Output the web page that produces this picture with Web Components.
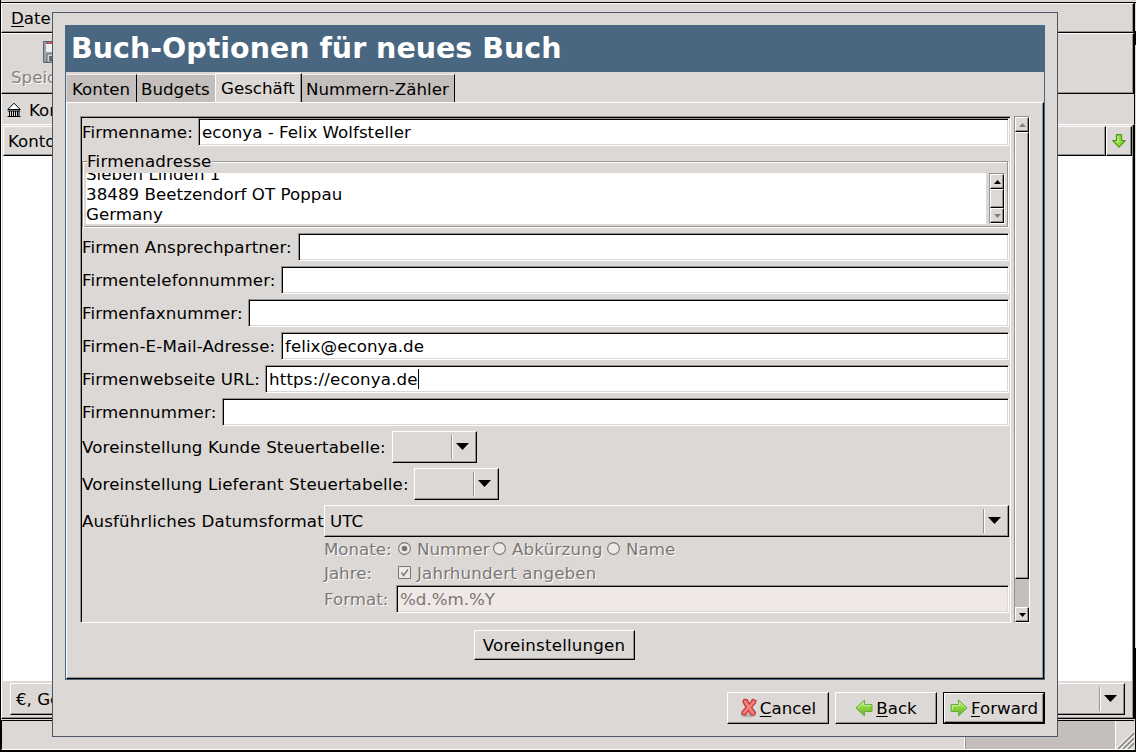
<!DOCTYPE html>
<html lang="de">
<head>
<meta charset="utf-8">
<title>Buch-Optionen für neues Buch</title>
<style>
html,body{margin:0;padding:0}
body{width:1136px;height:752px;overflow:hidden;position:relative;background:#dcd8d5;color:#000;
 font:16.67px/20px "DejaVu Sans",sans-serif;
 --bg:#dcd8d5;--mid:#c4bfbc;--shade:#96928f;--blue:#4a6781}
</style>
</head>
<body>
<main-window></main-window>
<options-dialog heading="Buch-Optionen für neues Buch">
  <tab-bar slot="tabs">
    <tab-label style="width:70px">Konten</tab-label>
    <tab-label style="width:78px" noline>Budgets</tab-label>
    <tab-label style="width:87px" active>Geschäft</tab-label>
    <tab-label style="width:153px">Nummern-Zähler</tab-label>
  </tab-bar>
  <option-list slot="page">
    <form-row label="Firmenname:" w="116"><text-entry style="letter-spacing:.03px">econya - Felix Wolfsteller</text-entry></form-row>
    <address-group></address-group>
    <form-row label="Firmen Ansprechpartner:" w="216"><text-entry></text-entry></form-row>
    <form-row label="Firmentelefonnummer:" w="199"><text-entry></text-entry></form-row>
    <form-row label="Firmenfaxnummer:" w="166"><text-entry></text-entry></form-row>
    <form-row label="Firmen-E-Mail-Adresse:" w="199"><text-entry style="letter-spacing:.05px">felix@econya.de</text-entry></form-row>
    <form-row label="Firmenwebseite URL:" w="183"><text-entry caret style="letter-spacing:.16px">https://econya.de</text-entry></form-row>
    <form-row label="Firmennummer:" w="140"><text-entry></text-entry></form-row>
    <form-row label="Voreinstellung Kunde Steuertabelle:" w="310"><combo-box style="width:85px"></combo-box></form-row>
    <form-row label="Voreinstellung Lieferant Steuertabelle:" w="332"><combo-box style="width:85px"></combo-box></form-row>
    <form-row label="Ausführliches Datumsformat" w="242"><combo-box style="flex:1">UTC</combo-box></form-row>
    <date-format></date-format>
  </option-list>
  <push-button slot="defaults" style="width:161px;height:30px;letter-spacing:.2px">Voreinstellungen</push-button>
  <push-button slot="actions" icon="cancel" style="width:102px;height:32px"><u>C</u>ancel</push-button>
  <push-button slot="actions" icon="back" style="width:102px;height:32px"><u>B</u>ack</push-button>
  <push-button slot="actions" icon="forward" default style="width:102px;height:32px"><u>F</u>orward</push-button>
</options-dialog>
<script>
const base = `*{box-sizing:border-box}
.out{border:1px solid;border-color:#fff #000 #000 #fff;box-shadow:inset -1px -1px 0 var(--shade);background:var(--bg)}`;
function define(name, render) {
  customElements.define(name, class extends HTMLElement {
    connectedCallback() {
      if (this.shadowRoot) return;
      const t = document.createElement('template');
      t.innerHTML = render(this);
      this.attachShadow({mode: 'open'}).append(t.content.cloneNode(true));
    }
  });
}
const arrowPath = 'M1 9 9.5 1V5.5H17V12.5H9.5V17Z';
const green = id => `<defs><linearGradient id="${id}" x1="0" y1="0" x2="0" y2="1"><stop offset="0" stop-color="#b8e676"/><stop offset=".5" stop-color="#8ad33c"/><stop offset="1" stop-color="#68b12e"/></linearGradient></defs>`;
const icons = {
  cancel: `<svg width="18" height="20" viewBox="0 0 18 20"><ellipse cx="8" cy="17.4" rx="7.5" ry="1.8" fill="#aaa6a3" opacity=".7"/><path d="M4 1.2 7.2 1.6 9.4 6 12.4 1.2 16 2.6 15.6 5 11.7 9.4 15.6 14.6 14.6 17 11.2 17.2 8.4 12.6 5.2 17.2 1.6 16 2 13.6 6 9.4 2.8 3.8Z" fill="#f06a6a" stroke="#b93a3e" stroke-width="1.1" stroke-linejoin="round"/><path d="M4.8 3 9 9.4 13.6 15.4M13.8 3.6 8.6 9.6 3.8 15" fill="none" stroke="#fa9c98" stroke-width="1"/></svg>`,
  back: `<svg width="18" height="18" viewBox="0 0 18 18">${green('g')}<path d="${arrowPath}" fill="url(#g)" stroke="#6caa42" stroke-linejoin="round"/><path d="M3.2 8.6 8.6 3.6V6.5H15.5" fill="none" stroke="#d0f39c" stroke-width=".9"/></svg>`,
  forward: `<svg width="18" height="18" viewBox="0 0 18 18">${green('g')}<g transform="matrix(-1 0 0 1 18 0)"><path d="${arrowPath}" fill="url(#g)" stroke="#6caa42" stroke-linejoin="round"/><path d="M15.5 11V6.5H8.6V3.6L3.2 8.6" fill="none" stroke="#d0f39c" stroke-width=".9"/></g></svg>`,
  down: `<svg width="14" height="14" viewBox="0 0 14 14"><path d="M4.5.6H9.5V6.5H13.2L7 13.2.8 6.5H4.5Z" fill="#8edb42" stroke="#4e9a12" stroke-width="1.2" stroke-linejoin="round"/><path d="M6 2V8H4" fill="none" stroke="#c9f592"/></svg>`
};

define('push-button', el => `<style>${base}
:host{display:block;flex:none}
.b{width:100%;height:100%;display:flex;align-items:center;justify-content:center;white-space:nowrap}
:host([default]){border:1px solid #000;box-sizing:border-box}
svg{flex:none;display:block;margin-right:3px}
.b.cancel svg{margin:-1px 2px 0 0}
span{padding-top:2px}
::slotted(u){text-underline-offset:2px}
</style><div class="b out ${el.getAttribute('icon') || ''}">${icons[el.getAttribute('icon')] || ''}<span><slot></slot></span></div>`);

define('combo-box', el => `<style>${base}
:host{display:block;flex:none;height:32px}
.c{height:100%;display:flex;align-items:center;padding:0 7px 0 5px}
.t{flex:1;white-space:nowrap;padding-top:2px}
.s{width:2px;height:24px;border-left:1px solid var(--shade);border-right:1px solid #fff;margin-right:3px}
svg{display:block;margin-top:-2px}
</style><div class="c out"><span class="t"><slot></slot></span><i class="s"></i><svg width="13" height="7"><path d="M0 0H13L6.5 7Z"/></svg></div>`);

define('text-entry', el => `<style>${base}
:host{display:block;flex:1;height:28px}
.e{height:100%;border:1px solid;border-color:var(--shade) #fff #fff var(--shade);box-shadow:inset 1px 1px 0 #000,inset -1px -1px 0 var(--bg);background:#fff;padding:4px 3px 0;white-space:pre;display:flex}
:host([disabled]) .e{background:#efe8e6;color:#7a7674}
.k{width:1px;height:20px;background:#000;margin-top:-1px}
</style><div class="e"><slot></slot>${el.hasAttribute('caret') ? '<i class="k"></i>' : ''}</div>`);

define('form-row', el => `<style>${base}
:host{display:flex;align-items:center;margin-bottom:5px}
label{width:${el.getAttribute('w')}px;flex:none;white-space:nowrap;letter-spacing:.14px;padding-top:2px}
</style><label>${el.getAttribute('label')}</label><slot></slot>`);

define('scroll-bar', el => `<style>${base}
:host{display:flex;flex-direction:column;box-sizing:border-box;border:1px solid;border-color:var(--shade) #fff #fff var(--shade);background:var(--mid);width:16px}
.b{height:15px;flex:none;display:flex;align-items:center;justify-content:center}
.th{height:var(--thumb)}
.sp{flex:1}
svg{display:block}
</style><div class="b out"><svg width="7" height="4"><path d="M0 4H7L3.5 0Z" fill="${el.getAttribute('up')}"/></svg></div><div class="th out"></div><div class="sp"></div><div class="b out"><svg width="7" height="4"><path d="M0 0H7L3.5 4Z" fill="${el.getAttribute('down')}"/></svg></div>`);

define('address-group', el => `<style>${base}
:host{display:block;height:77px;margin-bottom:5px}
.f{height:77px;display:flex;flex-direction:column}
.l{height:22px;display:flex;align-items:flex-start;letter-spacing:.22px}
.l span{padding-top:1px}
.l i{border-top:1px solid var(--shade);border-left:1px solid var(--shade);box-shadow:inset 1px 1px 0 #fff;width:5px;height:12px;margin-top:10px}
.l i:last-child{flex:1;border-left:0;border-right:1px solid #fff;box-shadow:inset -1px 0 0 var(--shade),inset 0 1px 0 #fff}
.b{height:55px;display:flex;border-left:1px solid var(--shade);border-right:1px solid #fff;border-bottom:1px solid #fff;box-shadow:inset 1px 0 0 #fff,inset -1px -1px 0 var(--shade);padding:0 3px 3px 3px}
.t{flex:1;background:#fff;height:51px;overflow:hidden;margin-right:3px;white-space:pre;letter-spacing:.04px}
.t div{margin-top:-8px}
scroll-bar{--thumb:22px;height:51px}
</style><div class="f"><div class="l"><i></i><span>Firmenadresse</span><i></i></div>
<div class="b"><div class="t"><div>Sieben Linden 1
38489 Beetzendorf OT Poppau
Germany</div></div><scroll-bar up="#000" down="#85817f"></scroll-bar></div></div>`);

define('date-format', el => `<style>${base}
:host{display:grid;grid-template-columns:72px 613px;grid-template-rows:24px 24px 28px;margin:-5px 0 0 242px;align-items:center;color:#7b7775;text-shadow:1px 1px 0 #fff;white-space:nowrap}
div{display:flex;align-items:center}
svg{display:block;margin:0 5px 0 2px;flex:none}
span{padding-top:2px}
.n{width:95px}.a{width:114px;letter-spacing:.2px}
.j{letter-spacing:.16px}
text-entry{text-shadow:none}
</style><span>Monate:</span>
<div>${[['Nummer','n',1],['Abkürzung','a',0],['Name','',0]].map(([t,c,on]) => `<div class="${c}"><svg width="14" height="14"><circle cx="6.5" cy="6.5" r="5.9" fill="#eee8e6" stroke="#797573" stroke-width="1.1"/>${on ? '<circle cx="6.5" cy="6.5" r="2.8" fill="#797573"/>' : ''}</svg><span>${t}</span></div>`).join('')}</div>
<span>Jahre:</span>
<div class="j"><svg width="14" height="14"><path d="M.5.5H12.5V12.5H.5Z" fill="#eee8e6" stroke="#797573"/><path d="M3.5 6.5 5.5 9.5 10 3.5" fill="none" stroke="#797573" stroke-width="1.4"/></svg><span>Jahrhundert angeben</span></div>
<span>Format:</span><text-entry disabled>%d.%m.%Y</text-entry>`);

define('option-list', el => `<style>${base}
:host{display:flex;height:507px;gap:3px}
.v{width:931px;height:507px;border:1px solid;border-color:var(--shade) #fff #fff var(--shade);box-shadow:inset 1px 1px 0 #000;padding:1px}
.v>div{width:927px}
scroll-bar{--thumb:447px}
</style><div class="v"><div><slot></slot></div></div><scroll-bar up="#85817f" down="#000"></scroll-bar>`);

define('tab-label', el => `<style>
:host{display:block;box-sizing:border-box;height:28px;background:var(--mid);border-top:1px solid #f0eeec;border-right:1px solid #000;padding:5px 0 0 5px;white-space:nowrap;border-bottom:0}
:host([noline]){border-right:0;padding-left:4px}
:host([active]){height:30px;background:var(--bg);border-top-color:#fff;border-left:1px solid #fff;padding-top:5px;box-shadow:inset -1px 0 0 var(--shade);margin-bottom:-1px}
:host(:last-child){padding-left:4px}
</style><slot></slot>`);
define('tab-bar', el => `<style>
:host{display:flex;align-items:flex-end;height:30px;padding-left:1px}
</style><slot></slot>`);

define('options-dialog', el => `<style>${base}
:host{display:block;box-sizing:border-box;position:absolute;left:52px;top:12px;width:1006px;height:725px;border:1px solid #4d5464;background:var(--bg);padding:12px}
h1{margin:0;height:47px;background:var(--blue);color:#fff;font:bold 28.5px/47px "DejaVu Sans",sans-serif;padding-left:6px;white-space:nowrap}
.n{border:1px solid var(--blue);border-top:0;height:608px;display:flex;flex-direction:column}
.p{flex:1;border:1px solid;border-color:#fff #000 #000 #fff;box-shadow:inset -1px -1px 0 var(--shade);padding:13px}
.d{display:flex;justify-content:center;padding:7px 2px 0 0}
.a{display:flex;justify-content:flex-end;gap:6px;margin-top:12px}
</style><h1>${el.getAttribute('heading')}</h1>
<div class="n"><slot name="tabs"></slot><div class="p"><slot name="page"></slot><div class="d"><slot name="defaults"></slot></div></div></div>
<div class="a"><slot name="actions"></slot></div>`);

define('main-window', el => `<style>${base}
:host{display:flex;flex-direction:column;width:1136px;height:752px;box-sizing:border-box;border-left:1px solid #000;white-space:nowrap;overflow:hidden;
 background:linear-gradient(var(--bg) 31px,#000 31px 45px,var(--bg) 45px 648px,#000 648px) right top/1px 100% no-repeat,var(--bg)}
.top{height:3px;border-bottom:1px solid #000;margin-left:-1px;background:var(--bg)}
.m{height:30px;width:1133px;padding:5px 9px}
.tb{height:61px;width:1133px;padding:7px 9px;color:#85817f;text-shadow:1px 1px 0 #fff}
.side{display:flex;flex-direction:column;border-right:1px solid #000;width:1134px}
.m.out,.tb.out{border-right-color:#000}
.tb svg{display:block;margin-left:32px}
.tb span{display:block;margin-top:5px}
.tab{height:30px;width:1134px;border-left:1px solid #fff;border-right:1px solid #000;display:flex;align-items:center;padding:3px 0 0 5px;gap:8px}
.tab svg{margin-top:-2px}
.nb{border:1px solid;border-color:#fff #000 #000 #fff;box-shadow:inset -1px -1px 0 var(--shade);border-right-width:2px;height:595px;width:1134px;padding:1px 0 0 1px;display:flex;flex-direction:column}
.h{height:30px;display:flex;flex:none}
.h .k{flex:1;padding:5px 4px}
.h .g{width:26px;margin-right:1px;display:flex;align-items:center;justify-content:center}
.w{height:525px;background:#fff;flex:none;margin-right:1px}
.c{padding:2px 8px 0 7px}
.s{display:flex;height:30px;width:1133px;margin-top:1px;border-top:1px solid #000;border-left:1px solid #000;border-bottom:1px solid #fff}
.s .q{width:151px;background:var(--mid);border-left:1px solid var(--shade);border-right:1px solid #fff}
.s .l{flex:1;border-right:1px solid #fff}
.s .r{width:18px;display:flex;align-items:flex-end}
.bot{height:2px;background:#000;margin-left:-1px}
</style>
<div class="top"></div>
<div class="side"><div class="m out"><u style="text-underline-offset:2px">D</u>ate</div>
<div class="tb out"><svg width="22" height="22"><path d="M.5.5H21V21.5H.5Z" fill="#9aa2ae" stroke="#59647a"/><path d="M3 1H19V11H3Z" fill="#eee"/><path d="M3 1H19V3H3Z" fill="#b9545e"/><path d="M4 13H18V21H4Z" fill="#d9d9d9" stroke="#666"/><path d="M6 15H9V20H6Z" fill="#667"/></svg><span>Speic</span></div></div>
<div class="tab"><svg width="14" height="16" fill="none" stroke="#000"><path d="M.8 7.5 7 1.2 13.2 7.5ZM.8 9H13.2" fill="#fff"/><path d="M2.5 9V14M4.5 9V14M6.5 9V14M8.5 9V14M10.5 9V14M12 9V14M.5 14.5H13.5"/></svg><span>Kon</span></div>
<div class="nb"><div class="h"><div class="k out">Konto</div><div class="g out">${icons.down}</div></div>
<div class="w"></div><div class="c"><combo-box>€, Ge</combo-box></div></div>
<div class="s"><div class="l"></div><div class="q"></div><div class="r"><svg width="18" height="18"><path d="M2 18 18 2M7 18 18 7M12 18 18 12" stroke="#8b8784" stroke-width="1.6"/><path d="M0 18 18 0M5 18 18 5M10 18 18 10" stroke="#fff"/></svg></div></div>
<div class="bot"></div>`);
</script>
</body>
</html>
